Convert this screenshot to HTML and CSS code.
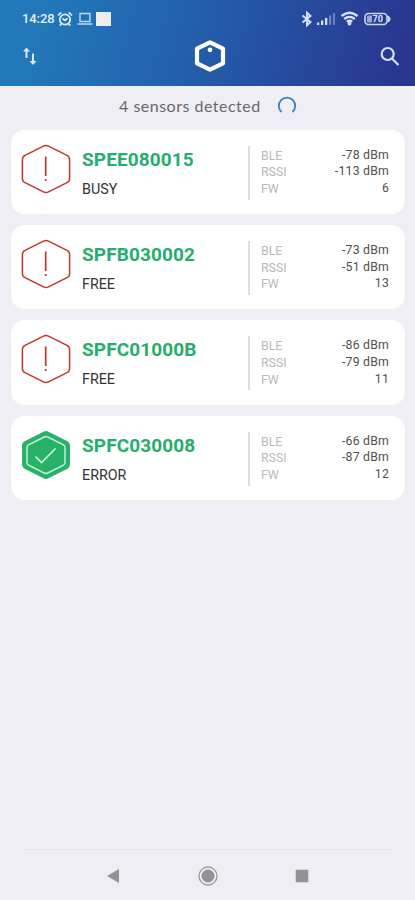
FILE: index.html
```html
<!DOCTYPE html>
<html lang="en">
<head>
  <meta charset="UTF-8">
  <title>Sensors</title>
  <meta name="viewport" content="width=device-width, initial-scale=1.0">
  <link rel="stylesheet" href="styles.css">
</head>
<body>

  <svg class="symbols" width="0" height="0">
    <symbol id="alert" viewBox="0 0 50 50">
      <path d="M22.5 2.2Q25 .8 27.5 2.2L46 11.3Q48.6 12.6 48.6 15.5V34.5Q48.6 37.4 46 38.7L27.5 47.8Q25 49.2 22.5 47.8L4 38.7Q1.4 37.4 1.4 34.5V15.5Q1.4 12.6 4 11.3Z" fill="none" stroke="#c33430" stroke-width="1.5"/>
      <path d="M24.700 12.500V32M24.700 35V37" stroke="#c33430" stroke-width="1.700"/>
    </symbol>
    <symbol id="ok" viewBox="0 0 50 50">
      <path d="M22.5 1.7Q25 .3 27.5 1.7L46.5 11.3Q49 12.6 49 15.5V34.5Q49 37.4 46.5 38.7L27.5 48.3Q25 49.7 22.5 48.3L3.5 38.7Q1 37.4 1 34.5V15.5Q1 12.6 3.5 11.3Z" fill="#27b267"/>
      <path d="M23.2 7Q25 6 26.8 7L42.5 14.9Q44 15.8 44 17.5V32.5Q44 34.2 42.5 35.1L26.8 43Q25 44 23.2 43L7.5 35.1Q6 34.2 6 32.5V17.5Q6 15.8 7.5 14.9Z" fill="none" stroke="#c8f0d9" stroke-width="1.5"/>
      <path d="M14.5 26.5L20.5 32.5L34.5 18.5" fill="none" stroke="#d9f7e5" stroke-width="1.6"/>
    </symbol>
  </svg>

  <header>
    <div class="status-bar">
      <span class="time">14:28</span>
      <svg class="alarm" width="16" height="16" viewBox="0 0 16 16" fill="none" stroke="#dcecfa" stroke-width="1.7">
        <circle cx="8" cy="8.500" r="5.200"/>
        <path d="M1 4.300L4.300 1.400M15 4.300L11.700 1.400M4.300 12.800L2.800 14.600M11.700 12.800L13.200 14.600M5.500 7.500L8 9.500L10.500 7.300"/>
      </svg>
      <svg class="laptop" width="16" height="14" viewBox="0 0 16 14" fill="none" stroke="#bfdaf2" stroke-width="1.400">
        <path d="M3 1.500H13V9.500H3ZM.5 12H15.500"/>
      </svg>
      <span class="square"></span>
      <div class="status-right">
        <svg width="12" height="16" viewBox="0 0 12 16" fill="none" stroke="#dce3fa" stroke-width="1.900">
          <path d="M1.500 4.500L9.500 11L6 14.300V1.700L9.500 5L1.500 11.500"/>
        </svg>
        <svg class="signal" width="19" height="14" viewBox="0 0 19 14" fill="#d5def5">
          <path d="M0 10.500H2.300V13H0ZM4 8.500H6.300V13H4ZM8 6H10.300V13H8Z"/>
          <path d="M12 3.500H14.200V13H12ZM16 1H18V13H16Z" opacity=".4"/>
        </svg>
        <svg class="wifi" width="19" height="15" viewBox="0 0 19 15" fill="none" stroke="#dce3fa" stroke-width="2.300">
          <path d="M1.500 5Q9.500-1.500 17.500 5M4.200 8Q9.500 3.800 14.800 8M6.800 10.700Q9.500 8.500 12.200 10.700"/>
          <circle cx="9.500" cy="12.500" r=".8"/>
        </svg>
        <svg class="battery" width="27" height="14" viewBox="0 0 27 14">
          <rect x="1" y="1.500" width="22" height="11" rx="3.500" fill="none" stroke="#ccd5f2" stroke-width="1.600"/>
          <rect x="3" y="3.500" width="5" height="7" rx="1" fill="#ccd5f2" opacity=".7"/>
          <path d="M23.500 3.500Q26.500 4.500 26.500 7T23.500 10.500Z" fill="#ccd5f2"/>
          <text x="8.500" y="10.300" font-size="9" font-weight="700" fill="#dfe5fa">70</text>
        </svg>
      </div>
    </div>
    <div class="toolbar">
      <svg width="16" height="20" viewBox="0 0 16 20" fill="none" stroke="#d6eafb" stroke-width="2">
        <path d="M4.500 12V3M11 7.500V17"/>
        <path d="M1 5.500L4.500 1.500L8 5.500ZM7.500 15L11 19L14.500 15Z" fill="#d6eafb" stroke="none"/>
      </svg>
      <svg class="logo" width="32" height="36" viewBox="0 0 32 36">
        <path d="M16 4.400L29 10.700V25.300L16 31.600L3 25.300V10.700Z" fill="none" stroke="#fff" stroke-width="4.200" stroke-linejoin="round"/>
        <circle cx="16" cy="11.800" r="2.400" fill="#fff"/>
      </svg>
      <svg width="20" height="21" viewBox="0 0 20 21" fill="none" stroke="#d5e0f8" stroke-width="2.200">
        <circle cx="7.700" cy="8" r="6"/>
        <path d="M12 12.500L18.500 19"/>
      </svg>
    </div>
  </header>

  <div class="detected">
    <span>4 sensors detected</span>
    <svg width="20" height="20" viewBox="0 0 20 20" fill="none" stroke="#3684bb" stroke-width="1.800">
      <path d="M4.500 17A8.200 8.200 0 1 1 15.500 17"/>
    </svg>
  </div>

  <main class="sensor-list">
    <div class="card">
      <svg class="state"><use href="#alert"/></svg>
      <div class="sensor">
        <h3>SPEE080015</h3>
        <p>BUSY</p>
      </div>
      <dl class="readings">
        <dt>BLE</dt><dd>-78 dBm</dd>
        <dt>RSSI</dt><dd>-113 dBm</dd>
        <dt>FW</dt><dd>6</dd>
      </dl>
    </div>
    <div class="card">
      <svg class="state"><use href="#alert"/></svg>
      <div class="sensor">
        <h3>SPFB030002</h3>
        <p>FREE</p>
      </div>
      <dl class="readings">
        <dt>BLE</dt><dd>-73 dBm</dd>
        <dt>RSSI</dt><dd>-51 dBm</dd>
        <dt>FW</dt><dd>13</dd>
      </dl>
    </div>
    <div class="card">
      <svg class="state"><use href="#alert"/></svg>
      <div class="sensor">
        <h3>SPFC01000B</h3>
        <p>FREE</p>
      </div>
      <dl class="readings">
        <dt>BLE</dt><dd>-86 dBm</dd>
        <dt>RSSI</dt><dd>-79 dBm</dd>
        <dt>FW</dt><dd>11</dd>
      </dl>
    </div>
    <div class="card">
      <svg class="state"><use href="#ok"/></svg>
      <div class="sensor">
        <h3>SPFC030008</h3>
        <p>ERROR</p>
      </div>
      <dl class="readings">
        <dt>BLE</dt><dd>-66 dBm</dd>
        <dt>RSSI</dt><dd>-87 dBm</dd>
        <dt>FW</dt><dd>12</dd>
      </dl>
    </div>
  </main>

  <footer>
    <svg width="14" height="16" viewBox="0 0 14 16"><path d="M1 8L13 1V15Z" fill="#929196"/></svg>
    <svg width="20" height="20" viewBox="0 0 20 20">
      <circle cx="10" cy="10" r="9" fill="none" stroke="#98979c" stroke-width="1.300"/>
      <circle cx="10" cy="10" r="6.500" fill="#929196"/>
    </svg>
    <svg width="14" height="14" viewBox="0 0 14 14"><rect x=".7" y=".7" width="12.600" height="12.600" rx="1" fill="#929196"/></svg>
  </footer>

</body>
</html>
```
FILE: styles.css
```css
* { box-sizing: border-box; }
body {
  font-family: Roboto, sans-serif;
  margin: 0;
  height: 900px;
  background-color: #efeef4;
  display: flex;
  flex-direction: column;
  overflow: hidden;
}
svg {
  display: block;
  flex-shrink: 0;
}
.symbols {
  position: absolute;
}
header {
  height: 86px;
  background: linear-gradient(105deg, #2277b9 0%, #2277b9 12%, #2458a7 55%, #29368f 95%);
}
.status-bar {
  height: 36px;
  padding: 1px 24px 0 22px;
  display: flex;
  align-items: center;
}
.time {
  color: #e3f1fc;
  font-size: 13px;
  font-weight: 500;
  width: 35px;
  letter-spacing: -0.1px;
}
.laptop {
  margin-left: 4px;
}
.square {
  width: 15px;
  height: 14px;
  margin-left: 3px;
  background: #ececec;
}
.status-right {
  display: flex;
  align-items: center;
  margin-left: auto;
}
.signal {
  margin-left: 4px;
}
.wifi {
  margin-left: 4px;
}
.battery {
  margin-left: 5px;
}
.toolbar {
  height: 40px;
  padding: 0 15px 0 22px;
  display: flex;
  justify-content: space-between;
  align-items: center;
}
.logo {
  margin-left: 1px;
}
.detected {
  height: 43px;
  padding: 0 0 5px 119px;
  display: flex;
  align-items: center;
  color: #69686d;
  font-family: Lato, sans-serif;
  font-size: 16px;
}
.detected span {
  width: 158px;
  letter-spacing: 0.5px;
  white-space: nowrap;
}
.sensor-list {
  padding: 0.5px 10.5px 0 11px;
  display: flex;
  flex-direction: column;
  gap: 11px;
}
.card {
  height: 84.4px;
  background: white;
  border-radius: 14px;
  display: flex;
}
.state {
  width: 50px;
  height: 50px;
  margin: 14px 0 0 10px;
}
.sensor {
  width: 177px;
  padding-left: 11px;
}
.sensor h3 {
  margin: 18px 0 0;
  color: #25ad6b;
  font-size: 19px;
  line-height: 23px;
  font-weight: 700;
  letter-spacing: 0.1px;
}
.sensor p {
  margin: 9px 0 0;
  color: #333;
  font-size: 14.3px;
  line-height: 18px;
}
.readings {
  width: 141px;
  height: 54px;
  margin: 16px 0 0;
  padding-left: 11px;
  border-left: 2px solid #dedede;
  display: grid;
  grid-template-columns: auto 1fr;
  grid-auto-rows: 16.8px;
  font-size: 12.3px;
  line-height: 17px;
}
.readings dt {
  color: #b9b9b9;
  padding-top: 2px;
}
.readings dd {
  margin: 0;
  padding-top: 1px;
  color: #4f4f4f;
  text-align: right;
  letter-spacing: 0.2px;
}
footer {
  margin: auto 24px 0;
  height: 51px;
  padding: 1px 82px 0;
  border-top: 1px solid #e5e4e9;
  display: flex;
  justify-content: space-between;
  align-items: center;
}
```
